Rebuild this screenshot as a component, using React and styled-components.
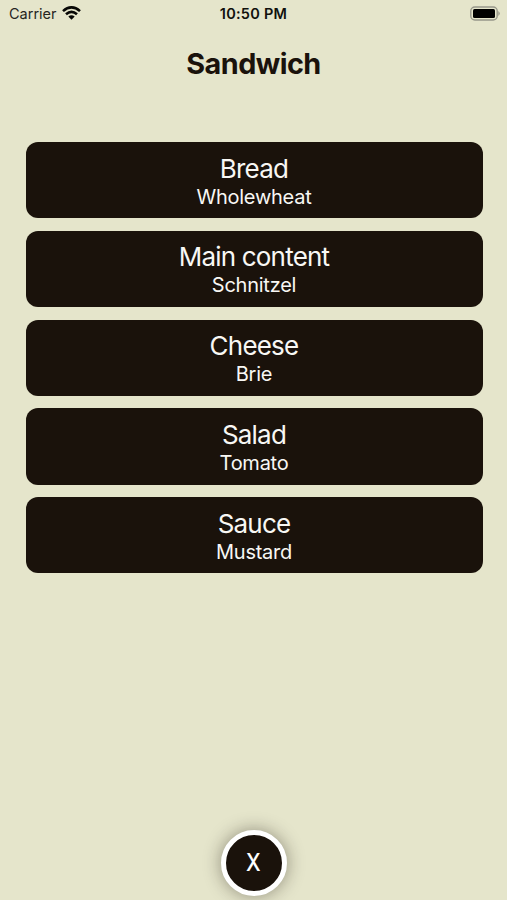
import React from "react";
import styled, { createGlobalStyle } from "styled-components";

const GlobalStyle = createGlobalStyle`
  *, *::before, *::after { box-sizing: border-box; }
  body { margin: 0; background: #e5e5cb; }
`;

const Screen = styled.main`
  display: flex;
  flex-direction: column;
  width: 100%;
  height: 900px;
  overflow: hidden;
  background: #e5e5cb;
  color: #1a120b;
  font-family: Inter, "Liberation Sans", sans-serif;
`;

const StatusBar = styled.header`
  display: grid;
  grid-template-columns: 1fr auto 1fr;
  align-items: center;
  height: 27px;
  padding: 0 6px 0 9px;
  font-size: 14.5px;
  line-height: 27px;
  color: #25251f;
`;

const Carrier = styled.div`
  display: flex;
  align-items: center;
  gap: 5px;

  svg {
    margin-bottom: 2px;
  }
`;

const Time = styled.time`
  margin-left: -3px;
  color: #11110d;
  font-weight: 600;
  letter-spacing: 0.25px;
`;

const BatterySlot = styled.div`
  display: flex;
  justify-content: flex-end;
`;

const Title = styled.h1`
  margin: 19px 0 0;
  height: 36px;
  font-size: 28.8px;
  line-height: 36px;
  font-weight: 700;
  letter-spacing: -0.55px;
  text-align: center;
`;

const Options = styled.section`
  display: flex;
  flex-direction: column;
  gap: 12.5px;
  padding: 60px 24.5px 0 25.5px;
`;

const Option = styled.button`
  display: flex;
  flex-direction: column;
  align-items: center;
  width: 100%;
  height: 76.3px;
  padding: 9.5px 0 0;
  border: 0;
  border-radius: 12px;
  background: #1a120b;
  color: #f8f7f4;
  font-family: inherit;
`;

const OptionName = styled.span`
  font-size: 26px;
  line-height: 34px;
  letter-spacing: -0.8px;
`;

const OptionValue = styled.span`
  font-size: 20px;
  line-height: 23px;
  letter-spacing: -0.25px;
`;

const Footer = styled.footer`
  display: flex;
  justify-content: center;
  margin-top: auto;
  padding-bottom: 4px;
`;

const CloseButton = styled.button`
  display: flex;
  align-items: center;
  justify-content: center;
  width: 66px;
  height: 66px;
  padding: 0;
  border: 5px solid #fff;
  border-radius: 50%;
  background: #1a120b;
  box-shadow: 0 0 18px rgba(26, 18, 11, 0.42);
  color: #fff;
  font: 500 24px/28px Inter, sans-serif;
`;

const CloseLabel = styled.span`
  transform: scaleX(0.87);
`;

const options = [
  { name: "Bread", value: "Wholewheat" },
  { name: "Main content", value: "Schnitzel" },
  { name: "Cheese", value: "Brie" },
  { name: "Salad", value: "Tomato" },
  { name: "Sauce", value: "Mustard" },
];

function WifiIcon() {
  return (
    <svg width="19" height="14" viewBox="0 0 19 14" fill="none" stroke="#080806" strokeWidth="2.6">
      <path d="M1 5.1Q9.5-2.4 18 5.1" />
      <path d="M4 8.3Q9.5 3.3 15 8.3" />
      <path d="M9.5 13.8L6.3 10.6Q9.5 7.8 12.7 10.6Z" fill="#080806" stroke="none" />
    </svg>
  );
}

function BatteryIcon() {
  return (
    <svg width="31" height="15" viewBox="0 0 31 15">
      <rect x="0.8" y="1" width="26.4" height="13" rx="4" fill="none" stroke="#97978a" strokeWidth="1.4" />
      <rect x="3" y="3.1" width="22" height="8.8" rx="1.5" fill="#000" />
      <path d="M28.3 5Q31.2 7.5 28.3 10Z" fill="#97978a" />
    </svg>
  );
}

export default function App() {
  return (
    <Screen>
      <GlobalStyle />
      <StatusBar>
        <Carrier>Carrier<WifiIcon /></Carrier>
        <Time>10:50 PM</Time>
        <BatterySlot><BatteryIcon /></BatterySlot>
      </StatusBar>
      <Title>Sandwich</Title>
      <Options>
        {options.map((o) => (
          <Option key={o.name}>
            <OptionName>{o.name}</OptionName>
            <OptionValue>{o.value}</OptionValue>
          </Option>
        ))}
      </Options>
      <Footer><CloseButton><CloseLabel>X</CloseLabel></CloseButton></Footer>
    </Screen>
  );
}
